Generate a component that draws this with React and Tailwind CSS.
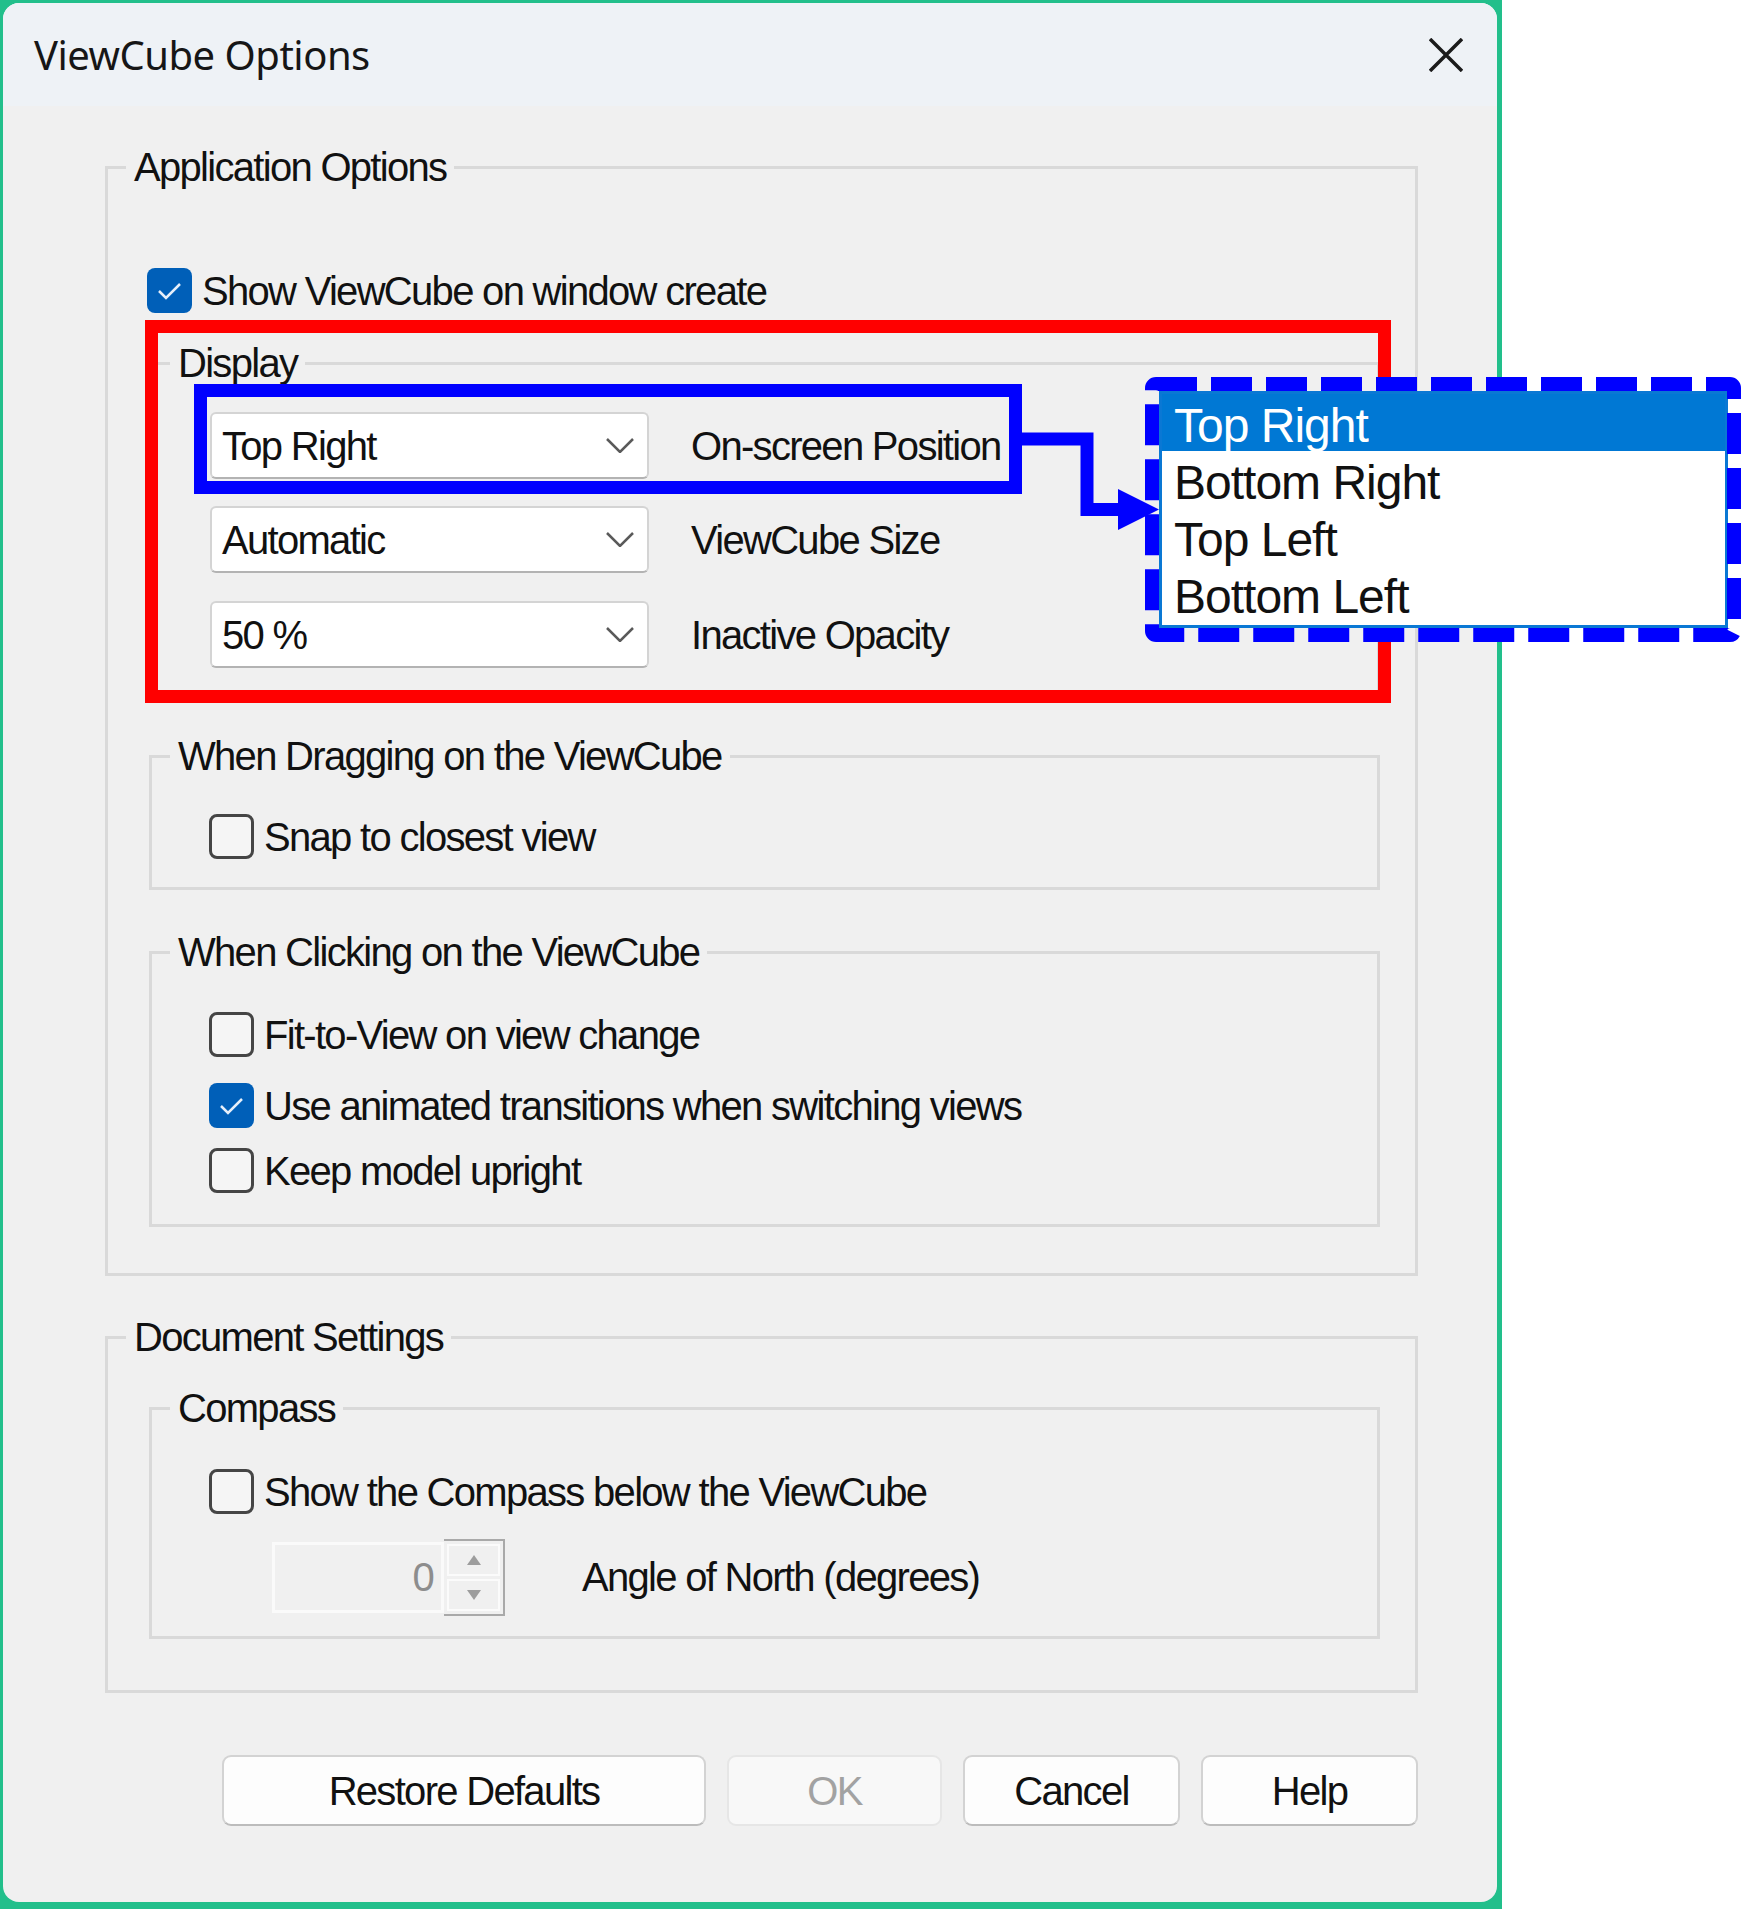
import React from "react"

// Shared text style for the classic dialog controls
const ui = "font-['Liberation_Sans',Arial,sans-serif] text-[40px] tracking-[-1.7px] text-[#111]"

function CheckBox({ checked, label, className = "" }) {
  return (
    <div className={`flex h-[45px] items-center ${className}`}>
      {checked ? (
        <span className="flex h-[45px] w-[45px] shrink-0 items-center justify-center rounded-[8px] bg-[#005fb8]">
          <svg width="45" height="45" viewBox="0 0 45 45">
            <path d="M12 23 L19 30 L33 16" fill="none" stroke="#e6effa" strokeWidth="2.5" />
          </svg>
        </span>
      ) : (
        <span className="h-[45px] w-[45px] shrink-0 rounded-[8px] border-[3px] border-[#454545] bg-[#f5f5f5]" />
      )}
      <span className="ml-[10px] whitespace-nowrap">{label}</span>
    </div>
  )
}

function GroupBox({ title, className = "", children }) {
  return (
    <fieldset className={`border-[3px] border-[#d9d9d9] ${className}`}>
      <legend className="ml-[18px] px-[8px] leading-[48px] whitespace-nowrap">{title}</legend>
      {children}
    </fieldset>
  )
}

function Chevron() {
  return (
    <svg width="28" height="15" viewBox="0 0 28 15">
      <polyline points="1,1 14,14 27,1" fill="none" stroke="#5a5a5a" strokeWidth="2.5" />
    </svg>
  )
}

function Combo({ value, label, className = "" }) {
  return (
    <div className={`flex items-center ${className}`}>
      <div className="flex h-[67px] w-[439px] items-center justify-between rounded-[6px] border-2 border-[#d4d4d4] border-b-[#b3b3b3] bg-white pl-[10px] pr-[13px]">
        <span className="whitespace-nowrap">{value}</span>
        <Chevron />
      </div>
      <span className="ml-[42px] whitespace-nowrap">{label}</span>
    </div>
  )
}

function SpinArrow({ up }) {
  return (
    <svg width="14" height="10" viewBox="0 0 14 10">
      <polygon points={up ? "7,0 14,10 0,10" : "0,0 14,0 7,10"} fill="#9d9d9d" />
    </svg>
  )
}

function Button({ children, width, disabled }) {
  return (
    <button
      className={`flex h-[71px] items-center justify-center rounded-[9px] border-2 ${
        disabled
          ? "border-[#e6e6e6] bg-[#f8f8f8] text-[#a2a2a2]"
          : "border-[#d3d3d3] border-b-[#bcbcbc] bg-[#fdfdfd]"
      } ${width}`}
    >
      {children}
    </button>
  )
}

const positions = ["Top Right", "Bottom Right", "Top Left", "Bottom Left"]

export default function App() {
  return (
    <div className={`relative h-[1909px] w-[1741px] overflow-hidden bg-white ${ui}`}>
      <div className="h-full w-[1502px] bg-[#22bf8b] pl-[3px] pt-[3px]">
        <div className="flex h-[1899px] w-[1494px] flex-col overflow-hidden rounded-[16px] bg-[#f0f0f0]">
          {/* title bar */}
          <div className="flex h-[103px] shrink-0 items-center justify-between bg-[#eef2f6] pl-[31px] pr-[34px]">
            <span className="font-['Noto_Sans',sans-serif] text-[40px] tracking-[-0.5px] text-[#161616]">
              ViewCube Options
            </span>
            <svg width="34" height="34" viewBox="0 0 34 34">
              <path d="M1 1 L33 33 M33 1 L1 33" stroke="#1b1b1b" strokeWidth="3.5" />
            </svg>
          </div>

          <GroupBox title="Application Options" className="ml-[102px] mt-[37px] w-[1313px] pb-[46px]">
            <CheckBox checked label="Show ViewCube on window create" className="ml-[39px] mt-[77px]" />

            <GroupBox title="Display" className="ml-[41px] mt-[26px] w-[1231px] pb-[25px]">
              <Combo value="Top Right" label="On-screen Position" className="ml-[58px] mt-[25px]" />
              <Combo value="Automatic" label="ViewCube Size" className="ml-[58px] mt-[27px]" />
              <Combo value="50 %" label="Inactive Opacity" className="ml-[58px] mt-[28px]" />
            </GroupBox>

            <GroupBox title="When Dragging on the ViewCube" className="ml-[41px] mt-[36px] w-[1231px] pb-[28px]">
              <CheckBox label="Snap to closest view" className="ml-[57px] mt-[34px]" />
            </GroupBox>

            <GroupBox title="When Clicking on the ViewCube" className="ml-[41px] mt-[38px] w-[1231px] pb-[31px]">
              <CheckBox label="Fit-to-View on view change" className="ml-[57px] mt-[36px]" />
              <CheckBox checked label="Use animated transitions when switching views" className="ml-[57px] mt-[26px]" />
              <CheckBox label="Keep model upright" className="ml-[57px] mt-[20px]" />
            </GroupBox>
          </GroupBox>

          <GroupBox title="Document Settings" className="ml-[102px] mt-[37px] w-[1313px] pb-[51px]">
            <GroupBox title="Compass" className="ml-[41px] mt-[23px] w-[1231px] pb-[22px]">
              <CheckBox label="Show the Compass below the ViewCube" className="ml-[57px] mt-[37px]" />
              <div className="ml-[120px] mt-[26px] flex h-[74px] items-center">
                <div className="flex h-[71px] w-[172px] items-center justify-end border-[3px] border-[#fafafa] bg-[#f0f0f0] pr-[8px] text-[#8d8d8d]">
                  0
                </div>
                <div className="flex h-[77px] w-[61px] flex-col border-2 border-l-0 border-[#a9a9a9] p-[3px]">
                  <div className="flex flex-1 items-center justify-center border-2 border-[#fbfbfb] bg-[#f0f0f0]">
                    <SpinArrow up />
                  </div>
                  <div className="mt-[3px] flex flex-1 items-center justify-center border-2 border-[#fbfbfb] bg-[#f0f0f0]">
                    <SpinArrow />
                  </div>
                </div>
                <span className="ml-[77px] whitespace-nowrap">Angle of North (degrees)</span>
              </div>
            </GroupBox>
          </GroupBox>

          {/* dialog buttons */}
          <div className="ml-[219px] mt-[62px] flex gap-[21px]">
            <Button width="w-[484px]">Restore Defaults</Button>
            <Button width="w-[215px]" disabled>OK</Button>
            <Button width="w-[217px]">Cancel</Button>
            <Button width="w-[217px]">Help</Button>
          </div>
        </div>
      </div>

      {/* callout frames and connector */}
      <svg className="pointer-events-none absolute left-0 top-0" width="1741" height="1909">
        <rect x="151.5" y="326.5" width="1233" height="370" fill="none" stroke="#ff0000" strokeWidth="13" />
        <rect x="200.5" y="390.5" width="815" height="97" fill="none" stroke="#0000ff" strokeWidth="13" />
        <polyline
          points="1016,439 1087,439 1087,509.5 1122,509.5"
          fill="none"
          stroke="#0000ff"
          strokeWidth="13"
          strokeLinejoin="miter"
        />
        <polygon points="1118,489 1118,530 1159,509.5" fill="#0000ff" />
      </svg>

      {/* opened position list */}
      <div className="absolute left-[1159px] top-[391px] w-[569px] border-[3px] border-[#0a78d4] bg-white pb-[3px] tracking-[-1px]">
        {positions.map((p, i) => (
          <div
            key={p}
            className={`flex h-[57px] items-center pl-[12px] pt-[7px] text-[48px] ${
              i === 0 ? "bg-[#0078d4] text-white" : "text-[#111]"
            }`}
          >
            {p}
          </div>
        ))}
      </div>

      <svg className="pointer-events-none absolute left-[1145px] top-[377px]" width="596" height="265">
        <rect
          x="7"
          y="7"
          width="582"
          height="251"
          rx="4"
          fill="none"
          stroke="#0000ff"
          strokeWidth="14"
          strokeDasharray="41 14"
        />
      </svg>
    </div>
  )
}
